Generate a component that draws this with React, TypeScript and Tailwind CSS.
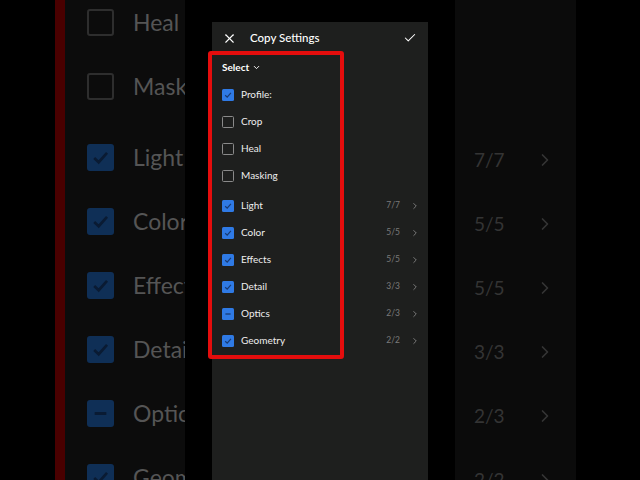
import { X, Check, ChevronDown, ChevronRight } from 'lucide-react'

type Item = { label: string; state: 'on' | 'off' | 'mixed'; count?: string; gap?: boolean }

const items: Item[] = [
  { label: 'Profile:', state: 'on' },
  { label: 'Crop', state: 'off' },
  { label: 'Heal', state: 'off' },
  { label: 'Masking', state: 'off' },
  { label: 'Light', state: 'on', count: '7/7', gap: true },
  { label: 'Color', state: 'on', count: '5/5' },
  { label: 'Effects', state: 'on', count: '5/5' },
  { label: 'Detail', state: 'on', count: '3/3' },
  { label: 'Optics', state: 'mixed', count: '2/3' },
  { label: 'Geometry', state: 'on', count: '2/2' },
]

function Box({ state, big }: { state: Item['state']; big?: boolean }) {
  const size = big ? 'h-[27px] w-[27px] rounded-[3px]' : 'h-[12px] w-[12px] rounded-[1.5px]'
  if (state === 'off') {
    return <div className={`${size} shrink-0 border ${big ? 'border-2 border-[#2e2e2e]' : 'border-[#8a8a8a]'}`} />
  }
  const fill = big ? 'bg-[#0f2f56]' : 'bg-[#2f7ae5]'
  const ink = big ? '#0a1b33' : '#183a72'
  return (
    <div className={`${size} ${fill} flex shrink-0 items-center justify-center`}>
      {state === 'on' ? (
        <svg viewBox="0 0 12 12" className="h-full w-full">
          <path d="M3.2 6.2 L5.2 8.1 L8.9 3.9" fill="none" stroke={ink} strokeWidth="1.2" />
        </svg>
      ) : (
        <svg viewBox="0 0 12 12" className="h-full w-full">
          <path d="M3.4 6 H8.6" fill="none" stroke={ink} strokeWidth="1.3" />
        </svg>
      )}
    </div>
  )
}

export default function App() {
  const dimRows = items.slice(2)
  const dimCounts = items.filter((i) => i.count)

  return (
    <div
      className="relative flex h-[480px] w-[640px] overflow-hidden bg-black"
      style={{ fontFamily: 'Lato, "Open Sans", sans-serif' }}
    >
      {/* Left blurred backdrop */}
      <div className="ml-[55px] h-full w-[130px] shrink-0 overflow-hidden border-l-[10px] border-[#4a0000] bg-[#0c0c0c]">
        <div className="mt-[-10px] flex flex-col pl-[22px]">
          {dimRows.map((item) => (
            <div
              key={item.label}
              className={`flex h-[64px] shrink-0 items-center gap-[19px] ${item.gap ? 'mt-[7px]' : ''}`}
            >
              <Box state={item.state} big />
              <span className="whitespace-nowrap text-[23px] text-[#555555]">{item.label}</span>
            </div>
          ))}
        </div>
      </div>

      {/* Copy settings panel */}
      <div className="ml-[27px] mt-[22px] flex w-[216px] shrink-0 flex-col bg-[#1e1f1e] text-white">
        <div className="flex h-[32px] items-center pl-[10px] pr-[11px]">
          <X size={15} strokeWidth={1.7} className="text-white" />
          <span className="ml-[13px] text-[11.5px] font-medium">Copy Settings</span>
          <Check size={14} strokeWidth={1.8} className="ml-auto text-white" />
        </div>
        <div className="flex h-[27px] items-center pl-[10px] text-[10px] font-bold">
          Select
          <ChevronDown size={9} strokeWidth={2.5} className="ml-[3px]" />
        </div>
        {items.map((item) => (
          <div
            key={item.label}
            className={`flex h-[27px] items-center pl-[10px] pr-[8px] ${item.gap ? 'mt-[3px]' : ''}`}
          >
            <Box state={item.state} />
            <span className="ml-[7px] text-[10px] text-[#eeeeee]">{item.label}</span>
            {item.count && (
              <>
                <span className="ml-auto text-[8.5px] text-[#7a7a7a]">{item.count}</span>
                <ChevronRight size={10} strokeWidth={2} className="ml-[10px] text-[#8a8a8a]" />
              </>
            )}
          </div>
        ))}
      </div>

      {/* Right blurred backdrop */}
      <div className="ml-[27px] h-full w-[121px] shrink-0 bg-[#0b0b0b]">
        <div className="mt-[128px] flex flex-col pl-[19px]">
          {dimCounts.map((item) => (
            <div key={item.label} className="flex h-[64px] shrink-0 items-center">
              <span className="w-[61px] text-[19px] text-[#343434]">{item.count}</span>
              <ChevronRight size={20} strokeWidth={2} className="text-[#363636]" />
            </div>
          ))}
        </div>
      </div>

      {/* Red highlight annotation */}
      <div className="absolute left-[208px] top-[51px] h-[308px] w-[136px] rounded-[3px] border-[4px] border-[#e40d0d]" />
    </div>
  )
}
